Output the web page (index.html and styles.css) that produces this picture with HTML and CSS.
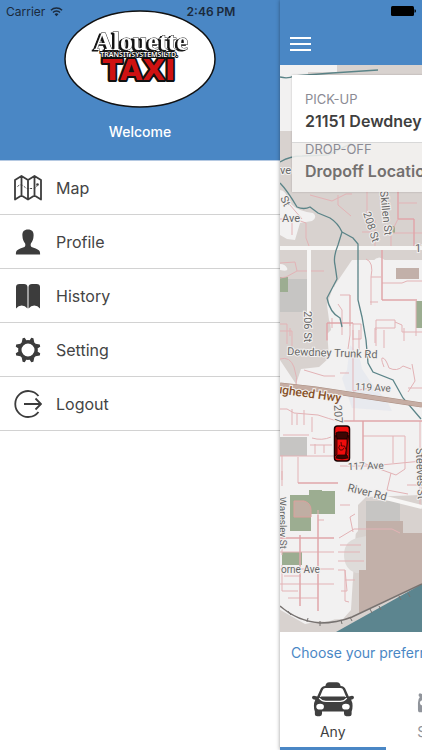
FILE: index.html
```html
<!DOCTYPE html>
<html lang="en">
<head>
  <meta charset="UTF-8">
  <meta name="viewport" content="width=device-width, initial-scale=1.0">
  <title>Alouette Taxi</title>
  <link rel="stylesheet" href="styles.css">
</head>
<body>
  <div class="status-bar">
    <span class="carrier">Carrier
      <svg class="wifi" viewBox="0 0 14 11" aria-hidden="true">
        <path d="M1 4.2a8.6 8.6 0 0 1 12 0M3.2 6.5a5.4 5.4 0 0 1 7.6 0" fill="none" stroke="currentColor" stroke-width="1.5"/>
        <path d="M7 10.6 4.9 8.4a3 3 0 0 1 4.2 0z" fill="currentColor"/>
      </svg>
    </span>
    <span class="time">2:46 PM</span>
    <svg class="battery" viewBox="0 0 25 10" aria-hidden="true">
      <rect width="23" height="10" rx="1.5"/>
      <path d="M23.5 3.2q1.500 0 1.500 1.800t-1.500 1.800z"/>
    </svg>
  </div>

  <div class="app">
    <aside class="drawer">
      <header class="drawer-header">
        <svg class="logo" viewBox="0 0 152 98" role="img" aria-label="Alouette Taxi logo">
          <ellipse cx="76" cy="49" rx="75" ry="48" fill="#fff" stroke="#111" stroke-width="1.5"/>
          <text class="logo-name" x="77" y="40">Alouette</text>
          <text class="logo-taxi" x="75" y="70">TAXI</text>
          <text class="logo-sub" x="75" y="47">TRANSIT SYSTEMS LTD.</text>
        </svg>
        <p class="welcome">Welcome</p>
      </header>
      <nav class="menu">
        <a href="#map">
          <svg viewBox="0 0 28 28" aria-hidden="true">
            <path d="M1 6 7.5 2 14 6l6.5-4L27 6v19.500l-6.500-4-6.500 4-6.500-4-6.500 4zM7.500 2v19.500M14 6v19.500M20.500 2v19.500" fill="none" stroke="currentColor" stroke-width="1.800" stroke-linejoin="round"/>
            <path d="M3.500 12.500q3-3 6-.5t3.500 2.500 5 0 5-3" fill="none" stroke="currentColor" stroke-width="1" stroke-dasharray="2 1.500"/>
            <circle cx="23.500" cy="10.500" r="1.300" fill="currentColor"/>
          </svg>
          Map
        </a>
        <a href="#profile">
          <svg viewBox="0 0 28 28" aria-hidden="true">
            <path d="M14 1.500c4 0 5.800 2.200 5.600 6-.1 4-1.400 6-2.600 7.800-.6 1.500-.4 3 .5 3.700 2.800 1 6 1.800 7.600 3.600.9 1.100 1 2.400 1 4H1.900c0-1.600.1-2.900 1-4 1.600-1.800 4.800-2.600 7.600-3.600.9-.7 1.100-2.200.5-3.700-1.200-1.800-2.500-3.800-2.600-7.800-.2-3.800 1.600-6 5.600-6z" fill="currentColor"/>
          </svg>
          Profile
        </a>
        <a href="#history">
          <svg viewBox="0 0 28 28" aria-hidden="true">
            <path d="M2 5q0-3 3.500-3h4.500q3.300 0 3.500 3v21.500Q11 23.500 7.700 23.500T2 26.500zM26 5q0-3-3.500-3H18q-3.300 0-3.500 3v21.500q2.500-3 5.800-3t5.700 3z" fill="currentColor"/>
          </svg>
          History
        </a>
        <a href="#setting">
          <svg viewBox="0 0 28 28" aria-hidden="true">
            <circle cx="14" cy="14" r="8.200" fill="none" stroke="currentColor" stroke-width="3.400"/>
            <g fill="currentColor">
              <path d="m7.700 6.500.9-4.300 2.100-.4 2.100 3.200h2.400l2.100-3.200 2.100.4.900 4.300-6.300-1z"/>
              <path d="m21.500 7.700 4.300.9.400 2.100-3.200 2.100v2.400l3.200 2.100-.4 2.100-4.300.9 1-6.300z"/>
              <path d="m20.300 21.500-.9 4.300-2.100.4-2.100-3.200h-2.400l-2.100 3.200-2.100-.4-.9-4.300 6.300 1z"/>
              <path d="m6.500 20.300-4.300-.9-.4-2.100L5 15.200v-2.400l-3.200-2.100.4-2.100 4.300-.9-1 6.300z"/>
            </g>
          </svg>
          Setting
        </a>
        <a href="#logout">
          <svg viewBox="0 0 28 28" aria-hidden="true">
            <path d="M24.500 6a13 13 0 1 0 0 16" fill="none" stroke="currentColor" stroke-width="1.800"/>
            <path d="M10 14h17M21.500 8.500 27 14l-5.500 5.500" fill="none" stroke="currentColor" stroke-width="1.800"/>
          </svg>
          Logout
        </a>
      </nav>
    </aside>

    <main class="page">
      <header class="navbar">
        <button class="menu-toggle" type="button" aria-label="Menu">
          <span></span>
          <span></span>
          <span></span>
        </button>
      </header>

      <section class="map-area">
        <svg class="map" viewBox="280 65 422 567" preserveAspectRatio="xMinYMin slice" aria-hidden="true">
          <!-- land -->
          <g fill="#d8d2cf">
            <path d="M280 131h12V75h16v-3h29v-7h365v195H352l-17 25-7 20 3 25-12 12-39 4z"/>
            <path d="M280 330h47l2 28-10 9-18 2-5 15-16-24zM280 606l8 3 15 12 40-2 8-9 8-130h63v152H280z"/>
          </g>
          <path fill="#f2f1f1" d="M280 190q6 0 10 13 7 8 23 10 5 4-1 8l-12 2-5 17-8-1-7-4zM280 264q5 0 7 4t-7 2zM333 287q10 2 20-4l6-8 6-3q0-8 8-11 6-7 13 0 9 5 10 14 2 10 8 10h18v55h-83l-10-20-2-15zM350 480h71v15l-55 2-8 8v26l-10 12-4 14 3 17 6 7-9 8-4 25q-8 10-20 7l-15 3-35-20V500z"/>
          <path fill="#dedbd9" d="M362 537q-18 2-18 18 0 14 12 18h10v-37z"/>
          <path fill="#e4e7ee" d="M350 345q10 8 12 24l8 12 18 22 4 8-40-3-10-30 5-8z" opacity=".7"/>
          <path fill="#c6c5c3" d="M280 279h27v33h-27zM280 437h27v19h-27zM366 501h34v22h-34z"/>
          <path fill="#c2b0a9" d="M396 268h23v11h-23zM366 521h37v12h19v52l-63 28v-43h7z"/>
          <path fill="#9cad91" d="M280 277h8v15h-8zM416 301h10v27h-10zM290 495h19v-5h13v1h13v23h-24v17h-21zM282 552h20v13h-20zM392 226h3v7h-3z"/>
          <path fill="#c0aea3" stroke="#dba09c" d="M294 501h10q7 2 7 9v7h-17z"/>
          <path fill="#5c858f" d="m336 632 86-48v48z"/>

          <!-- small roads -->
          <g class="streets">
            <path d="M280 219h15l11 4v15l3 8M290 205l12 14M292 222v13M310 195l22 6 14-7h6M338 195v10l13 11M367 190v29M375 220v26M398 190v29h16v28M398 219l-7 14v14M362 232h10M392 233h30M399 203h18"/>
            <path d="M382 250v50h35M280 263l15-1 2 9h27M297 271l-11 6-6 1M366 259q8 3 5 18v28M382 283h20l5-2h15M371 277h10M416 301v35M340 295h10v40l-2 14M350 295v31M338 304l4 6v25M332 318v10M327 323h26v17M327 323v18M353 324h8v15h-8M376 330v-10h19v8h-20v15M395 322l7 3v7h20M376 329v17M404 328v13M370 302h8"/>
            <path d="M280 324h7v20M280 331h12v15M290 328v8M353 330v26M359 330v20M280 359q10-3 14 8t2 20M304 370l20 6h11M340 373h9M353 356v35l18-3M384 330v18M384 367q-4-10-1-9t6 10q8 4 14-2l8 3M412 364l3 17-7 11M408 388h14"/>
            <path d="M280 409h7l7 4 24 2q12 4 19 6h85M354 397v24M363 421v42l33 12 9-6v-33h-42M393 436v27M304 410v15M292 425v-16M297 425v-11M312 417v15M283 435h26M312 438q10 3 19-1M280 456h59M298 457v26M282 455v25M310 445h22M315 444v10M324 445v8M340 466h30M381 465l41-4M391 473l-4 17 21 4M298 483h40M282 471v15"/>
            <path d="M420 421v87M407 485h15M280 538h54M280 552h54M280 569h54M280 584h54M288 598h30M300 535v71M318 510v101M318 520h6M340 505h10M350 517l5-3M350 517l3 15M339 538l15-9h38l8 4M340 545h21M338 552h22M338 561h26M338 570h7l2 21h-6M345 570v31l4 1M345 580h10M284 576h17M282 565v26h16M282 535v20"/>
          </g>
          <g class="streets lanes">
            <path d="M363 421v42M298 483h40M280 538h54M300 535v71M318 515v96M398 190v29h16v28M382 250v50h35M327 340v-17h26M337 421h85"/>
          </g>
          <path fill="none" stroke="#f7f6f5" stroke-width="4" d="M280 248h142M309 248v80M382 497l40 10"/>

          <!-- water -->
          <g fill="none" stroke="#5b8488" stroke-width="1.300">
            <path d="M280 77q8 2 14-1l38-3 46-3M280 162q10-6 22-6l26-1 24-12M280 183q7 7 17 24 7 3 13 0l8 6 12 5q8 5 12 14l-4 13q-5 12-3 20l2 14-10 19q3 15 13 20l2 9M342 232l11 6 5 6v56l4 17 4 23 2 23 5 9 20 8 10 18 18 21"/>
          </g>

          <!-- highway and railway -->
          <path fill="none" stroke="#a98d80" stroke-width="5" d="m280 385 36 4 106 16"/>
          <path fill="none" stroke="#c6ada3" stroke-width="4" d="m280 385 36 4 106 16"/>
          <path fill="none" stroke="#777270" stroke-width="1.500" d="M280 606q17 15 40 17 17 0 32-6l70-33"/>
          <path fill="none" stroke="#777270" d="m288 611 3 4m17 3-1 4m13-1v5m21-6 1 4m8-7 2 4m18-12 2 4m7-7 2 4m18-14 2 4m7-7 2 4"/>

          <!-- street names -->
          <g class="labels">
            <text x="280" y="174">ve</text>
            <text x="282" y="222">Ave</text>
            <text transform="translate(280 198) rotate(65)">St</text>
            <text transform="translate(380 191) rotate(84)">Skillen St</text>
            <text transform="translate(363 213) rotate(72)">208 St</text>
            <text x="415" y="252">119 Ave</text>
            <text transform="translate(304 311) rotate(90)">206 St</text>
            <text x="287" y="355" transform="rotate(2 287 355)">Dewdney Trunk Rd</text>
            <text x="355" y="390" class="small" transform="rotate(3 355 390)">119 Ave</text>
            <text transform="translate(334 405) rotate(87)">207 St</text>
            <text x="348" y="470" class="small" transform="rotate(-2 348 470)">117 Ave</text>
            <text transform="translate(347 491) rotate(14)">River Rd</text>
            <text transform="translate(416 448) rotate(88)">Steeves St</text>
            <text transform="translate(279 497) rotate(89)" class="small">Waresley St</text>
            <text x="281" y="573" class="small">orne Ave</text>
            <text class="highway" transform="translate(262 391) rotate(8)">Lougheed Hwy</text>
          </g>

          <!-- taxi marker -->
          <g stroke="#1b0000">
            <rect x="334.500" y="426" width="15" height="35" rx="3" fill="#f00c0c" stroke-width="1.500"/>
            <path fill="#3b0603" d="m336 433 2-1h8l2 1-1 6h-10z"/>
            <path fill="#8e0805" stroke-width=".7" d="m335 435 2 4v15l-2 2zM349 435l-2 4v15l-2 2z"/>
            <path fill="#3b0603" stroke-width=".7" d="M337 455h10l1 3q-6 2-12 0z"/>
            <path fill="none" stroke-width=".7" d="m341 442 .5 4h3l1.500 3.500M340 445q-2.500 3 0 5 3 1 4-2"/>
          </g>
        </svg>

        <div class="addresses">
          <div class="address pickup">
            <span>PICK-UP</span>
            <strong>21151 Dewdney Trunk Road</strong>
          </div>
          <div class="address dropoff">
            <span>DROP-OFF</span>
            <strong>Dropoff Location</strong>
          </div>
        </div>
      </section>

      <section class="vehicles">
        <h2>Choose your preferred vehicle type</h2>
        <div class="vehicle-list">
          <button class="vehicle active" type="button">
            <svg viewBox="0 0 44 36" aria-hidden="true">
              <path fill="currentColor" d="M14 4.500q.5-4 4-4h8q3.500 0 4 4 4 .3 5.500 4l3 7 3.500-1q2 0 2 2t-3 2.200q1.500 2.800 1.500 6.300 0 4-1 6v3q0 2-2.500 2H36q-2.500 0-2.500-2.500V31h-23v2.500Q10.500 36 8 36H5.500Q3 36 3 34v-3q-1-2-1-6 0-3.500 1.500-6.300Q0 18.500 0 16.500t2-2l3.500 1 3-7q1.500-3.700 5.500-4z"/>
              <path fill="#fff" d="M14 6.500h16q2 0 3 2.500l2.800 7H8.200L11 9q1-2.500 3-2.500z"/>
              <path fill="currentColor" d="M9 15.500h26q-2 2.500-6 2.500H15q-4 0-6-2.500z"/>
              <path fill="none" stroke="#fff" stroke-width="1.200" d="M7.500 17q3 3.500 7 3.500h15q4 0 7-3.500"/>
              <ellipse cx="8.500" cy="26" rx="4" ry="3" fill="#fff"/>
              <ellipse cx="35.500" cy="26" rx="4" ry="3" fill="#fff"/>
            </svg>
            Any
          </button>
          <button class="vehicle" type="button">
            <svg viewBox="0 0 44 36" aria-hidden="true">
              <path fill="currentColor" d="M10 7h24q2 0 3 3l1 3 3-1q2 1 1 3l-1 1q2 2 2 6v7q0 3-2 3h-3q-2 0-2-3H8q0 3-2 3H3q-2 0-2-3v-7q0-4 2-6l-1-1q-1-2 1-3l3 1 1-3q1-3 3-3z"/>
              <path fill="#fff" d="M12 10h20q2 0 4 7H8q2-7 4-7z"/>
              <ellipse cx="7" cy="22" rx="4" ry="3" fill="#fff"/>
              <ellipse cx="37" cy="22" rx="4" ry="3" fill="#fff"/>
            </svg>
            Sedan
          </button>
          <button class="vehicle" type="button">Van</button>
          <button class="vehicle" type="button">Accessible</button>
        </div>
      </section>
    </main>
  </div>
</body>
</html>
```

FILE: styles.css
```css
* {
  box-sizing: border-box;
}

body {
  margin: 0;
  font-family: Inter, "Liberation Sans", sans-serif;
  color: #3f3f3f;
  background: #fff;
}

/* Status bar */
.status-bar {
  position: absolute;
  top: 0;
  left: 0;
  right: 0;
  z-index: 5;
  display: grid;
  grid-template-columns: 1fr auto 1fr;
  align-items: center;
  height: 22px;
  padding: 0 6px;
  font-size: 12px;
  color: #1b2a3c;
}

.carrier {
  display: flex;
  align-items: center;
  gap: 5px;
}

.wifi {
  width: 13px;
  height: 11px;
}

.time {
  font-weight: 600;
}

.battery {
  width: 25px;
  height: 10px;
  justify-self: end;
  fill: #000;
}

/* Layout: the page slides to the right of the open drawer */
.app {
  display: flex;
  min-height: 100vh;
  overflow: hidden;
}

.drawer {
  flex: 0 0 280px;
}

.page {
  flex: 0 0 100%;
  display: flex;
  flex-direction: column;
  z-index: 1;
  background: #fff;
  box-shadow: 0 0 4px rgba(0, 0, 0, 0.4);
}

/* Drawer */
.drawer-header {
  display: flex;
  flex-direction: column;
  align-items: center;
  height: 160px;
  padding-top: 10px;
  background: #4a87c5;
}

.logo {
  width: 152px;
  height: 98px;
}

.logo-name {
  font: bold 26px "Liberation Serif", serif;
  text-anchor: middle;
  fill: #fff;
  stroke: #222;
  stroke-width: 1px;
  paint-order: stroke;
  filter: drop-shadow(-2px 1px 0 #111);
}

.logo-sub {
  font: 600 7px "Noto Sans", sans-serif;
  text-anchor: middle;
  fill: #fff;
  stroke: #111;
  stroke-width: 2px;
  paint-order: stroke;
}

.logo-taxi {
  font: bold 29px "DejaVu Sans", sans-serif;
  text-anchor: middle;
  fill: #cf1212;
  stroke: #111;
  stroke-width: 4px;
  stroke-linejoin: round;
  paint-order: stroke;
}

.welcome {
  margin: 14px 0 0;
  font-size: 14px;
  line-height: 20px;
  font-weight: 500;
  color: #fff;
}

.menu {
  border-top: 1px solid #b5c9e2;
}

.menu a {
  display: flex;
  align-items: center;
  gap: 14px;
  height: 54px;
  padding: 1px 14px 0;
  border-bottom: 1px solid #d2d2d2;
  font-size: 16px;
  color: #444;
  text-decoration: none;
}

.menu svg {
  width: 28px;
  height: 28px;
  color: #3c3c3c;
}

/* Navbar */
.navbar {
  display: flex;
  align-items: flex-end;
  height: 65px;
  padding: 0 10px 14px;
  background: #4a87c5;
}

.menu-toggle {
  display: flex;
  flex-direction: column;
  gap: 4px;
  width: 21px;
  padding: 0;
  border: 0;
  background: none;
}

.menu-toggle span {
  height: 2px;
  background: #fff;
}

/* Map */
.map-area {
  position: relative;
  flex: 1;
  min-height: 300px;
  background: #f2f1f1;
}

.map {
  position: absolute;
  width: 100%;
  height: 100%;
  background: #f2f1f1;
}

.streets {
  fill: none;
  stroke: #e3b3b6;
  stroke-width: 1px;
}

.lanes {
  stroke: #dfa0a4;
}

.labels text {
  font: 11px Roboto, sans-serif;
  fill: #686868;
  stroke: #f2f0ef;
  stroke-width: 2px;
  paint-order: stroke;
}

.labels .small {
  font-size: 10px;
}

.labels .highway {
  font-size: 12px;
  font-weight: 500;
  fill: #875128;
}

.addresses {
  position: relative;
  margin: 10px 12px;
  box-shadow: 0 0 2px rgba(0, 0, 0, 0.2);
}

.address {
  display: flex;
  flex-direction: column;
  gap: 3px;
  padding: 0 13px;
}

.address span {
  font-size: 13px;
  line-height: 13px;
  color: #8b8b94;
}

.address strong {
  font-size: 16px;
  line-height: 24px;
  font-weight: 600;
}

.pickup {
  height: 68px;
  padding-top: 18px;
  background: #fff;
  border-bottom: 1px solid #d8d8d8;
}

.dropoff {
  height: 49px;
  background: rgba(246, 244, 242, 0.85);
}

.dropoff strong {
  color: #73706f;
}

/* Vehicle picker */
.vehicles {
  display: flex;
  flex-direction: column;
  justify-content: space-between;
  height: 118px;
}

.vehicles h2 {
  margin: 12px 11px 0;
  font-size: 14px;
  line-height: 18px;
  font-weight: 400;
  color: #4a87c5;
}

.vehicle-list {
  display: grid;
  grid-template-columns: repeat(4, 1fr);
}

.vehicle {
  display: flex;
  flex-direction: column;
  align-items: center;
  justify-content: flex-end;
  gap: 5px;
  padding: 0 0 5px;
  border: 0;
  border-bottom: 3px solid transparent;
  background: none;
  font: 14px/20px Inter, sans-serif;
  color: #90949b;
}

.vehicle svg {
  width: 42px;
  height: 36px;
}

.vehicle.active {
  border-color: #4a87c5;
  color: #3f3f3f;
}
```
